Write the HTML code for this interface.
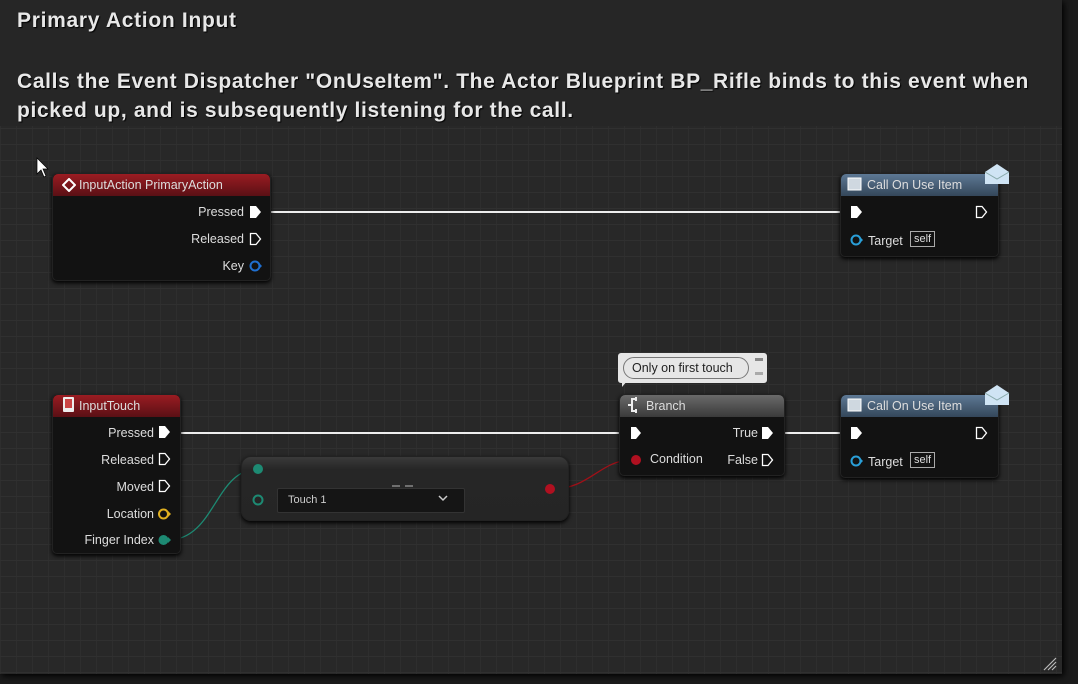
<!DOCTYPE html>
<html><head><style>
*{margin:0;padding:0;box-sizing:border-box}
body{width:1078px;height:684px;overflow:hidden;background:#1b1b1b;font-family:"Liberation Sans",sans-serif;position:relative}
.cm{position:absolute;left:0;top:0;width:1062px;height:674px;background-color:#282828;
background-image:linear-gradient(#303030 1px,transparent 1px),linear-gradient(90deg,#2e2e2e 1px,transparent 1px);background-size:16px 16px;box-shadow:2px 2px 6px #000}
.hd{position:absolute;left:0;top:0;width:1062px;height:126px;background:#262626}
.t1{position:absolute;left:17px;top:9px;color:#e8e8e8;font-weight:bold;font-size:21px;letter-spacing:0.7px;text-shadow:1px 1px 1px #000}
.t2{position:absolute;left:17px;top:67px;color:#e8e8e8;font-weight:bold;font-size:21px;letter-spacing:0.65px;line-height:29px;text-shadow:1px 1px 1px #000;width:1040px}
.n{position:absolute;background:#121212;border-radius:5px;box-shadow:0 2px 4px #000;border:1px solid #222}
.nh{height:22px;border-radius:5px 5px 0 0;color:#ddd;font-size:12.5px;padding:4px 0 0 26px;position:relative}
.red{background:linear-gradient(#9a1c22,#5a1015)}
.blue{background:linear-gradient(#5d7894,#34475a)}
.grey{background:linear-gradient(#6a6a6a,#3a3a3a)}
.l{position:absolute;color:#ddd;font-size:12.5px;white-space:nowrap}
.r{text-align:right}
svg{position:absolute}
</style></head><body>
<div class="cm"></div>
<div class="hd"></div>
<div class="t1">Primary Action Input</div>
<div class="t2">Calls the Event Dispatcher "OnUseItem". The Actor Blueprint BP_Rifle binds to this event when<br>picked up, and is subsequently listening for the call.</div>

<svg width="1078" height="684" style="left:0;top:0">
<line x1="262" y1="212" x2="850" y2="212" stroke="#eee" stroke-width="2"/>
<line x1="170" y1="433" x2="630" y2="433" stroke="#eee" stroke-width="2"/>
<line x1="775" y1="433" x2="850" y2="433" stroke="#eee" stroke-width="2"/>
<path d="M168 540 C215 540 215 469 258 469" stroke="#1d8a73" stroke-width="1.3" fill="none"/>
<path d="M552 489 C590 489 600 460 632 460" stroke="#a01018" stroke-width="1.3" fill="none"/>
<path d="M37 158 L37 174 L41 170 L44 177 L46 176 L43 169 L48 169 Z" fill="#fff" stroke="#000" stroke-width="0.7"/>
<path d="M1044 670 L1056 658 M1048 670 L1056 662 M1052 670 L1056 666" stroke="#bbb" stroke-width="1.2"/>
</svg>

<div class="n" style="left:52px;top:173px;width:219px;height:108px">
<div class="nh red">InputAction PrimaryAction</div>
</div>
<svg style="left:62px;top:178px" width="14" height="14"><path d="M7 1 L13 7 L7 13 L1 7Z" fill="none" stroke="#fff" stroke-width="2"/></svg>
<div class="l r" style="right:834px;top:205px">Pressed</div>
<div class="l r" style="right:834px;top:232px">Released</div>
<div class="l r" style="right:834px;top:259px">Key</div>
<svg style="left:249px;top:205px" width="14" height="70">
<path d="M1 1 H7 L12 7 L7 13 H1Z" fill="#fff"/>
<path d="M1.5 28.5 H7 L11.5 34 L7 39.5 H1.5Z" fill="none" stroke="#fff" stroke-width="1.3"/>
<circle cx="6" cy="61" r="4.5" fill="none" stroke="#1f6fd0" stroke-width="2"/><path d="M10 58 L13 61 L10 64Z" fill="#1f6fd0"/>
</svg>

<div class="n" style="left:840px;top:173px;width:159px;height:84px"><div class="nh blue">Call On Use Item</div></div>
<div class="n" style="left:840px;top:394px;width:159px;height:84px"><div class="nh blue">Call On Use Item</div></div>
<svg style="left:846px;top:160px" width="170" height="320">
<rect x="2" y="18" width="13" height="12" fill="#cfd8e0" stroke="#fff"/><rect x="2" y="239" width="13" height="12" fill="#cfd8e0" stroke="#fff"/>
<g transform="translate(138,2)"><path d="M1 10 L13 2 L25 10 V22 H1Z" fill="#cfe4f4"/><path d="M1 10 L13 17 L25 10" fill="none" stroke="#8aa" /></g>
<g transform="translate(138,223)"><path d="M1 10 L13 2 L25 10 V22 H1Z" fill="#cfe4f4"/><path d="M1 10 L13 17 L25 10" fill="none" stroke="#8aa" /></g>
<path d="M5 46 H11 L16 52 L11 58 H5Z" fill="#fff"/>
<path d="M130.5 46.5 H136 L140.5 52 L136 57.5 H130.5Z" fill="none" stroke="#fff" stroke-width="1.3"/>
<circle cx="10" cy="80" r="4.5" fill="none" stroke="#2a9fd8" stroke-width="2"/><path d="M14 77 L17 80 L14 83Z" fill="#2a9fd8"/>
<path d="M5 267 H11 L16 273 L11 279 H5Z" fill="#fff"/>
<path d="M130.5 267.5 H136 L140.5 273 L136 278.5 H130.5Z" fill="none" stroke="#fff" stroke-width="1.3"/>
<circle cx="10" cy="301" r="4.5" fill="none" stroke="#2a9fd8" stroke-width="2"/><path d="M14 298 L17 301 L14 304Z" fill="#2a9fd8"/>
</svg>
<div class="l" style="left:868px;top:234px">Target</div>
<div class="l" style="left:910px;top:231px;border:1px solid #aaa;padding:1px 3px;font-size:11px">self</div>
<div class="l" style="left:868px;top:455px">Target</div>
<div class="l" style="left:910px;top:452px;border:1px solid #aaa;padding:1px 3px;font-size:11px">self</div>

<div class="n" style="left:52px;top:394px;width:129px;height:160px"><div class="nh red">InputTouch</div></div>
<svg style="left:62px;top:396px" width="14" height="18"><rect x="1" y="1" width="11" height="15" rx="1" fill="#eee"/><rect x="3" y="3" width="7" height="9" fill="#c44"/></svg>
<div class="l r" style="right:924px;top:426px">Pressed</div>
<div class="l r" style="right:924px;top:453px">Released</div>
<div class="l r" style="right:924px;top:480px">Moved</div>
<div class="l r" style="right:924px;top:507px">Location</div>
<div class="l r" style="right:924px;top:533px">Finger Index</div>
<svg style="left:158px;top:425px" width="16" height="124">
<path d="M1 1 H7 L12 7 L7 13 H1Z" fill="#fff"/>
<path d="M1.5 28.5 H7 L11.5 34 L7 39.5 H1.5Z" fill="none" stroke="#fff" stroke-width="1.3"/>
<path d="M1.5 55.5 H7 L11.5 61 L7 66.5 H1.5Z" fill="none" stroke="#fff" stroke-width="1.3"/>
<circle cx="5.5" cy="89" r="4.5" fill="none" stroke="#e0b020" stroke-width="2"/><path d="M10 86 L13 89 L10 92Z" fill="#e0b020"/>
<circle cx="5.5" cy="115" r="5" fill="#1d8a73"/><path d="M10 112 L13 115 L10 118Z" fill="#1d8a73"/>
</svg>

<div class="n" style="left:241px;top:456px;width:328px;height:65px;background:linear-gradient(#3a3a3a,#262626 20%,#252525);border-radius:10px"></div>
<div style="position:absolute;left:277px;top:488px;width:188px;height:25px;background:#151515;border:1px solid #333;border-radius:2px"></div>
<div class="l" style="left:288px;top:494px;font-size:11px;color:#ccc">Touch 1</div>
<svg style="left:250px;top:462px" width="310" height="45">
<circle cx="8" cy="7" r="5" fill="#1d8a73"/>
<circle cx="8" cy="38" r="4.5" fill="none" stroke="#1d8a73" stroke-width="2"/>
<path d="M142 24 H150 M155 24 H163" stroke="#888" stroke-width="1.5"/>
<path d="M189 34 L193 38 L197 34" stroke="#ccc" stroke-width="1.5" fill="none"/>
<circle cx="300" cy="27" r="5" fill="#b01020"/>
</svg>

<div style="position:absolute;left:618px;top:353px;width:149px;height:30px;background:#e6e6e6;border-radius:3px"></div>
<svg style="left:618px;top:380px" width="12" height="10"><path d="M4 0 L10 0 L4 7Z" fill="#e6e6e6"/></svg>
<div style="position:absolute;left:623px;top:357px;width:126px;height:22px;border:1.5px solid #777;border-radius:11px;color:#222;font-size:12.5px;padding:3px 0 0 8px">Only on first touch</div>
<div style="position:absolute;left:755px;top:358px;width:8px;height:3px;background:#888"></div>
<div style="position:absolute;left:755px;top:372px;width:8px;height:3px;background:#aaa"></div>

<div class="n" style="left:619px;top:394px;width:166px;height:82px"><div class="nh grey">Branch</div></div>
<svg style="left:627px;top:397px" width="16" height="16"><path d="M9 2 H5 V14 H9 M1 8 H5 M9 0 L9 4 M9 12 L9 16" stroke="#eee" stroke-width="2" fill="none"/></svg>
<svg style="left:628px;top:426px" width="150" height="42">
<path d="M3 1 H8 L13 7 L8 13 H3Z" fill="#fff"/>
<circle cx="8" cy="34" r="5" fill="#b01020"/>
<path d="M134 1 H140 L145 7 L140 13 H134Z" fill="#fff"/>
<path d="M134.5 28.5 H140 L144.5 34 L140 39.5 H134.5Z" fill="none" stroke="#fff" stroke-width="1.3"/>
</svg>
<div class="l" style="left:650px;top:452px">Condition</div>
<div class="l r" style="right:320px;top:426px">True</div>
<div class="l r" style="right:320px;top:453px">False</div>
</body></html>
